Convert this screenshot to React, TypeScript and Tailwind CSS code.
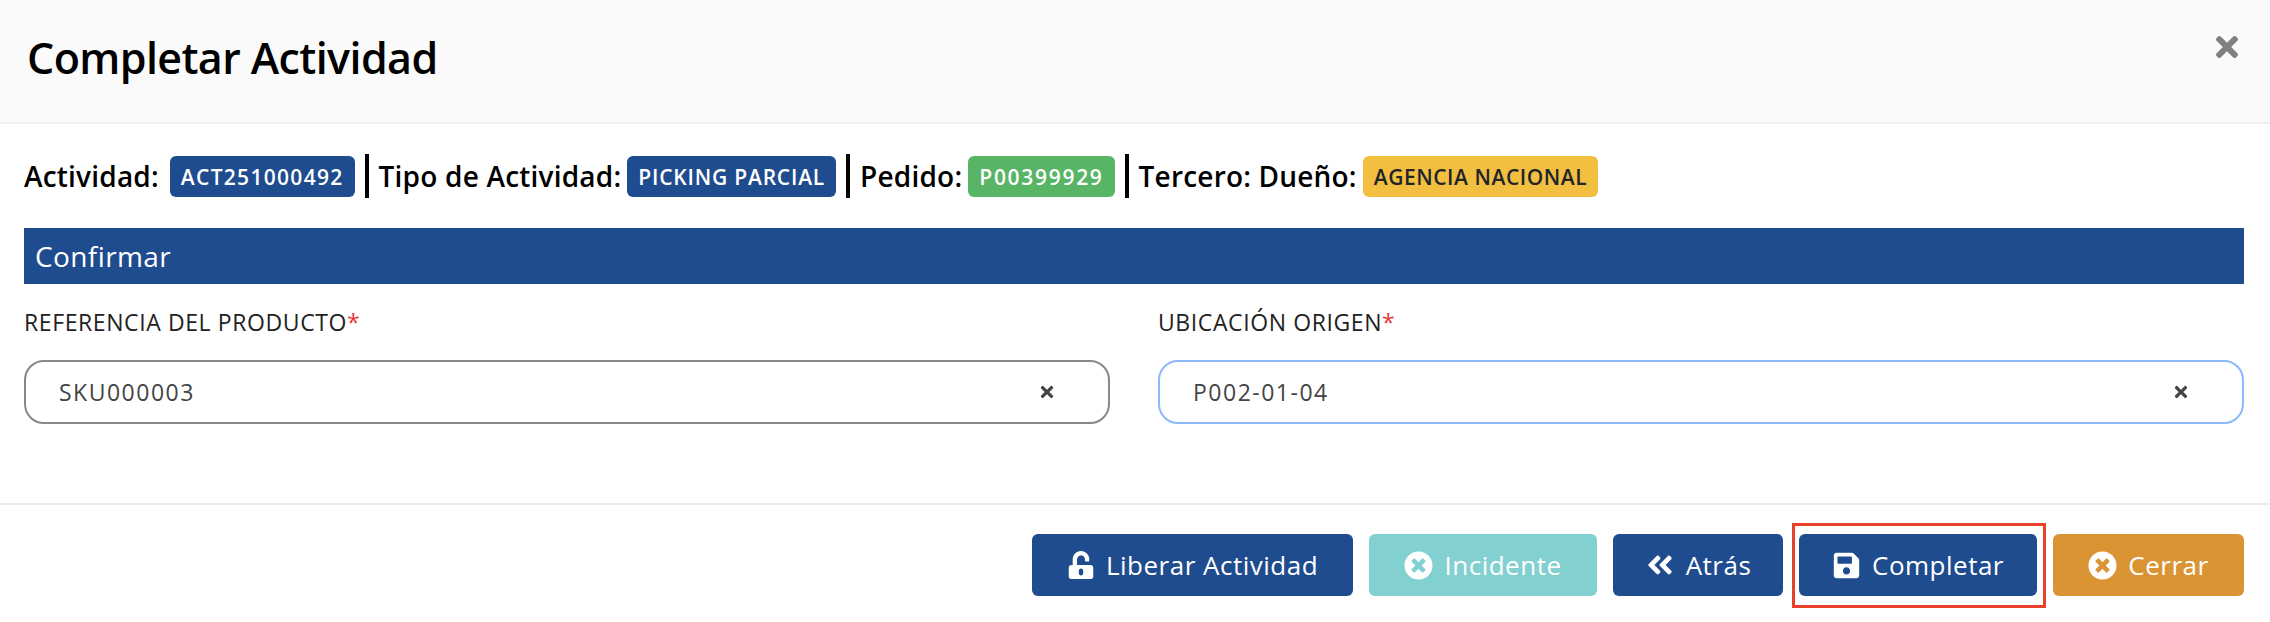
import type { ReactNode } from "react";
import { FaAngleDoubleLeft, FaSave, FaTimes, FaTimesCircle, FaUnlockAlt } from "react-icons/fa";

const font = "font-['Open_Sans',sans-serif]";

function Tag({ label, className, children }: { label: string; className: string; children: ReactNode }) {
  return (
    <span className="flex items-center gap-[6px]">
      <span className="text-[28px] leading-none font-semibold tracking-[0.2px] text-black">{label}</span>
      <span className={`flex h-[41px] items-center rounded-[6px] px-[11px] pt-[3px] text-[21px] font-semibold ${className}`}>
        {children}
      </span>
    </span>
  );
}

function Separator() {
  return <span className="mx-[10px] h-[44px] w-[4px] bg-black" />;
}

function Field({ label, value, inputClass }: { label: string; value: string; inputClass: string }) {
  return (
    <div>
      <div className="flex h-[34px] items-center text-[23px] tracking-[0.6px] text-[#222]">
        {label}
        <span className="text-[#e53935]">*</span>
      </div>
      <div className={`mt-[21px] flex h-[64px] items-center justify-between rounded-[20px] border-2 pr-[52px] pl-[33px] ${inputClass}`}>
        <span className="text-[23px] tracking-[1.5px] text-[#444]">{value}</span>
        <FaTimes className="size-[18px] text-[#444]" />
      </div>
    </div>
  );
}

function Action({ icon, label, className }: { icon: ReactNode; label: string; className: string }) {
  return (
    <button className={`flex h-[62px] items-center justify-center gap-[11px] rounded-[6px] text-[26px] font-medium tracking-[0.5px] text-white ${className}`}>
      {icon}
      {label}
    </button>
  );
}

export default function App() {
  return (
    <div className={`relative h-[622px] w-full overflow-hidden bg-white ${font}`}>
      <header className="flex h-[124px] items-start justify-between border-b-2 border-[#f0f0f0] bg-[#fafafa] pr-[27px] pl-[27px]">
        <h1 className="mt-[30px] text-[43px] leading-[56px] font-semibold tracking-[-0.6px] text-black">Completar Actividad</h1>
        <FaTimes className="mt-[31px] size-[32px] text-[#808080]" />
      </header>

      <main className="pr-[26px] pl-6">
        <div className="mt-[30px] flex items-center">
          <Tag label="Actividad:" className="ml-[5px] bg-[#1f4c8f] tracking-[1.3px] text-white">ACT251000492</Tag>
          <Separator />
          <Tag label="Tipo de Actividad:" className="bg-[#1f4c8f] tracking-[0.8px] text-white">PICKING PARCIAL</Tag>
          <Separator />
          <Tag label="Pedido:" className="bg-[#57b565] tracking-[1.7px] text-white">P00399929</Tag>
          <Separator />
          <Tag label="Tercero: Dueño:" className="bg-[#f3bf41] tracking-[0.55px] text-[#212529]">AGENCIA NACIONAL</Tag>
        </div>

        <div className="mt-[30px] flex h-[56px] items-center bg-[#1f4c8f] px-[11px] text-[28px] tracking-[0.4px] text-white">Confirmar</div>

        <div className="mt-[21px] grid grid-cols-2 gap-[48px]">
          <Field label="REFERENCIA DEL PRODUCTO" value="SKU000003" inputClass="border-[#888888]" />
          <Field label="UBICACIÓN ORIGEN" value="P002-01-04" inputClass="border-[#8ab8f8]" />
        </div>
      </main>

      <footer className="mt-[79px] flex justify-end gap-[16px] border-t-2 border-[#ebebf0] pt-[29px] pr-[26px]">
        <Action icon={<FaUnlockAlt className="size-[28px]" />} label="Liberar Actividad" className="w-[321px] bg-[#1f4c8f]" />
        <Action icon={<FaTimesCircle className="size-[29px]" />} label="Incidente" className="w-[228px] bg-[#83d0d0]" />
        <Action icon={<FaAngleDoubleLeft className="size-[30px]" />} label="Atrás" className="w-[170px] gap-[3px] bg-[#1f4c8f]" />
        <Action icon={<FaSave className="size-[29px]" />} label="Completar" className="w-[238px] bg-[#1f4c8f]" />
        <Action icon={<FaTimesCircle className="size-[29px]" />} label="Cerrar" className="w-[191px] bg-[#da9433]" />
      </footer>

      {/* red annotation box drawn over the screenshot */}
      <div className="absolute top-[523px] left-[1792px] h-[85px] w-[254px] border-[3px] border-[#e8402a]" />
    </div>
  );
}
